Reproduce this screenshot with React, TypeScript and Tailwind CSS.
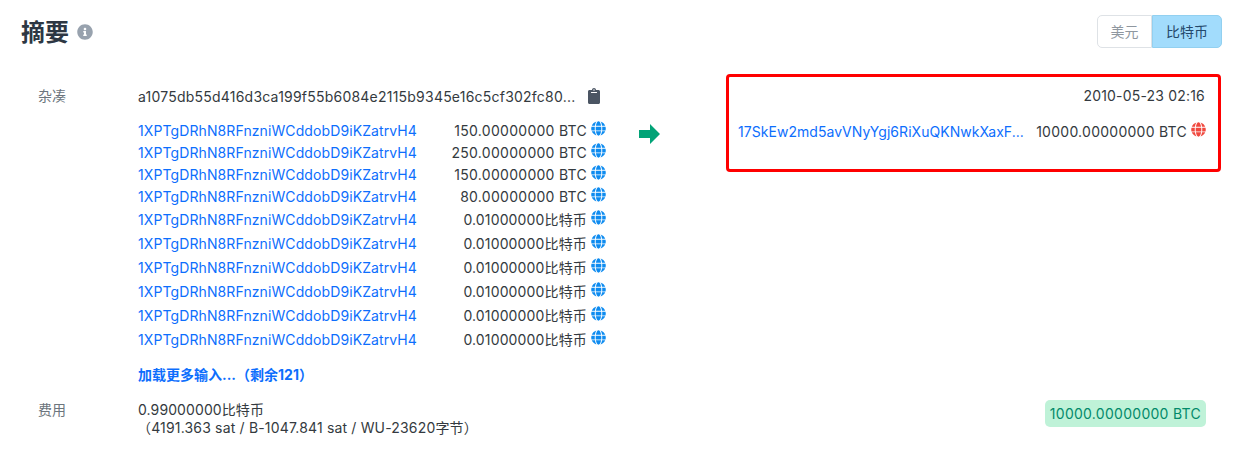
import { FaClipboard, FaGlobe, FaInfoCircle } from "react-icons/fa";

const font = { fontFamily: "Inter, 'Noto Sans CJK SC', sans-serif" };

const ADDRESS = "1XPTgDRhN8RFnzniWCddobD9iKZatrvH4";

const inputs = [
  { amount: "150.00000000 BTC", rowClass: "h-[22px]", amountClass: "tracking-[0.28px]" },
  { amount: "250.00000000 BTC", rowClass: "h-[22px]", amountClass: "tracking-[0.28px]" },
  { amount: "150.00000000 BTC", rowClass: "h-[22px]", amountClass: "tracking-[0.28px]" },
  { amount: "80.00000000 BTC", rowClass: "h-[22px]", amountClass: "tracking-[0.28px]" },
  { amount: "0.01000000比特币", rowClass: "h-[24px]", amountClass: "tracking-[0.15px]" },
  { amount: "0.01000000比特币", rowClass: "h-[24px]", amountClass: "tracking-[0.15px]" },
  { amount: "0.01000000比特币", rowClass: "h-[24px]", amountClass: "tracking-[0.15px]" },
  { amount: "0.01000000比特币", rowClass: "h-[24px]", amountClass: "tracking-[0.15px]" },
  { amount: "0.01000000比特币", rowClass: "h-[24px]", amountClass: "tracking-[0.15px]" },
  { amount: "0.01000000比特币", rowClass: "h-[24px]", amountClass: "tracking-[0.15px]" },
];

export default function App() {
  return (
    <div className="w-[1249px] h-[451px] bg-white overflow-hidden text-[14px] text-[#343a40]" style={font}>
      {/* Header */}
      <div className="flex items-start justify-between pl-[21px] pr-[27px] pt-[15px]">
        <div className="flex items-center h-[34px]">
          <h1 className="pt-[2px] text-[24px] font-bold text-[#2d3743] leading-[36px]">摘要</h1>
          <FaInfoCircle className="ml-[8px] text-[16px] text-[#98a2ae]" />
        </div>
        <div className="flex h-[33px] text-[14px]">
          <div className="w-[55px] flex items-center justify-center border border-[#dee2e6] rounded-l-[5px] text-[#8f979f]">美元</div>
          <div className="w-[70px] flex items-center justify-center border border-[#92d0f0] rounded-r-[5px] bg-[#a2dcfc] text-[#24496b]">比特币</div>
        </div>
      </div>

      {/* Body */}
      <div className="flex items-start mt-[25px]">
        <div className="w-[639px] shrink-0 pt-[11px]">
          <div className="flex">
            <div className="w-[100px] ml-[38px] shrink-0 text-[#6c757d] leading-[22px]">杂凑</div>
            <div className="flex items-center h-[22px]">
              <span className="tracking-[0.22px]">a1075db55d416d3ca199f55b6084e2115b9345e16c5cf302fc80...</span>
              <FaClipboard className="ml-[11px] text-[16px] text-[#4b5563]" />
            </div>
          </div>

          <div className="mt-[12px] ml-[138px] w-[468px]">
            {inputs.map((row, i) => (
              <div key={i} className={`flex items-center justify-between ${row.rowClass}`}>
                <a className="text-[#0d6efd] tracking-[0.1px]">{ADDRESS}</a>
                <div className="flex items-center">
                  <span className={row.amountClass}>{row.amount}</span>
                  <FaGlobe className="ml-[4px] mb-[3px] text-[15px] text-[#0d8bf0]" />
                </div>
              </div>
            ))}
            <div className="mt-[13px] h-[22px] font-bold text-[14px] leading-[22px] text-[#0d6efd]">加载更多输入...（剩余121）</div>
          </div>
        </div>

        <svg className="shrink-0 mt-[50px]" width="21" height="20" viewBox="0 0 21 20">
          <path d="M0 6h11V0l10 10-10 10v-6H0z" fill="#02a377" />
        </svg>

        <div className="ml-[66px] w-[495px] h-[98px] border-[3px] border-[#ff0000] rounded-[4px] pl-[9px] pr-[12px] pt-[8px]">
          <div className="text-right leading-[22px] tracking-[0.19px] mr-[1px]">2010-05-23 02:16</div>
          <div className="flex items-center justify-between mt-[13px] h-[22px]">
            <a className="text-[#0d6efd] tracking-[0.04px]">17SkEw2md5avVNyYgj6RiXuQKNwkXaxF...</a>
            <div className="flex items-center">
              <span className="tracking-[0.26px]">10000.00000000 BTC</span>
              <FaGlobe className="ml-[4px] mb-[4px] text-[15px] text-[#f0483e]" />
            </div>
          </div>
        </div>
      </div>

      {/* Fee row */}
      <div className="flex items-start justify-between pr-[43px] mt-[15px]">
        <div className="flex">
          <div className="w-[100px] ml-[38px] text-[#6c757d] leading-[18px]">费用</div>
          <div className="leading-[18px]">
            <div className="tracking-[0.1px]">0.99000000比特币</div>
            <div className="tracking-[0.17px] -ml-[1px]">（4191.363 sat / B-1047.841 sat / WU-23620字节）</div>
          </div>
        </div>
        <div className="-mt-[1px] h-[27px] px-[5px] rounded-[5px] bg-[#bff2d8] text-[#028a6a] leading-[27px] tracking-[0.28px]">10000.00000000 BTC</div>
      </div>
    </div>
  );
}
